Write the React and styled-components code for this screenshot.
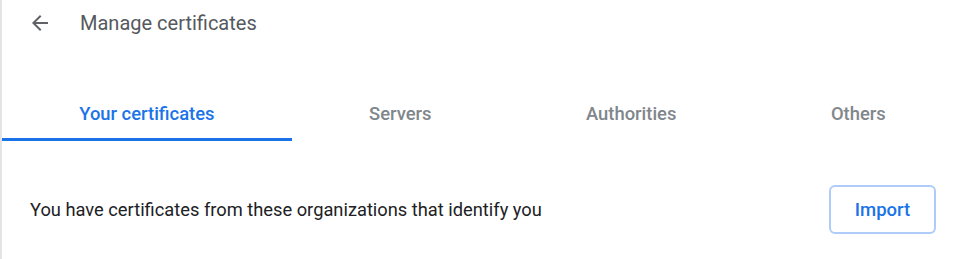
import React from "react";
import styled, { createGlobalStyle } from "styled-components";

const GlobalStyle = createGlobalStyle`
  body {
    margin: 0;
    background: #ffffff;
    font-family: Roboto, "Liberation Sans", sans-serif;
  }
`;

const StyledPage = styled.div`
  width: 956px;
  height: 259px;
  box-sizing: border-box;
  border-left: 2px solid #e4e4e4;
  background: #ffffff;
  overflow: hidden;
`;

const StyledHeader = styled.div`
  display: flex;
  align-items: center;
  height: 45px;
  padding-left: 26px;
`;

const StyledBackButton = styled.button`
  display: flex;
  align-items: center;
  justify-content: center;
  width: 24px;
  height: 24px;
  padding: 0;
  border: none;
  background: none;
  color: #5f6368;
`;

const StyledTitle = styled.h1`
  margin: 0 0 0 28px;
  font-size: 20px;
  font-weight: 400;
  color: #55595e;
`;

const StyledTabs = styled.div`
  display: flex;
  margin: 43px -7px 0 0;
`;

const StyledTab = styled.div`
  flex: 1 1 auto;
  display: flex;
  align-items: center;
  justify-content: center;
  height: 50px;
  font-size: 18.4px;
  font-weight: 500;
  color: ${(p) => (p.active ? "#1a73e8" : "#80868b")};
  border-bottom: 3px solid ${(p) => (p.active ? "#1a73e8" : "transparent")};
`;

const StyledRow = styled.div`
  display: flex;
  align-items: center;
  justify-content: space-between;
  padding: 44px 20px 0 28px;
`;

const StyledMessage = styled.div`
  font-size: 18.3px;
  color: #202124;
`;

const StyledButton = styled.button`
  width: 107px;
  height: 49px;
  border: 2px solid #aecbfa;
  border-radius: 6px;
  background: #ffffff;
  color: #1a73e8;
  font-family: Roboto, "Liberation Sans", sans-serif;
  font-size: 18.5px;
  font-weight: 500;
`;

const tabs = ["Your certificates", "Servers", "Authorities", "Others"];

const BackArrow = () => (
  <svg width="24" height="24" viewBox="0 0 24 24" fill="currentColor">
    <path d="M20 11H7.83l5.59-5.59L12 4l-8 8 8 8 1.41-1.41L7.83 13H20v-2z" />
  </svg>
);

const App = () => (
  <StyledPage>
    <GlobalStyle />
    <StyledHeader>
      <StyledBackButton>
        <BackArrow />
      </StyledBackButton>
      <StyledTitle>Manage certificates</StyledTitle>
    </StyledHeader>
    <StyledTabs>
      {tabs.map((tab, i) => (
        <StyledTab key={tab} active={i === 0}>
          {tab}
        </StyledTab>
      ))}
    </StyledTabs>
    <StyledRow>
      <StyledMessage>
        You have certificates from these organizations that identify you
      </StyledMessage>
      <StyledButton>Import</StyledButton>
    </StyledRow>
  </StyledPage>
);

export default App;
